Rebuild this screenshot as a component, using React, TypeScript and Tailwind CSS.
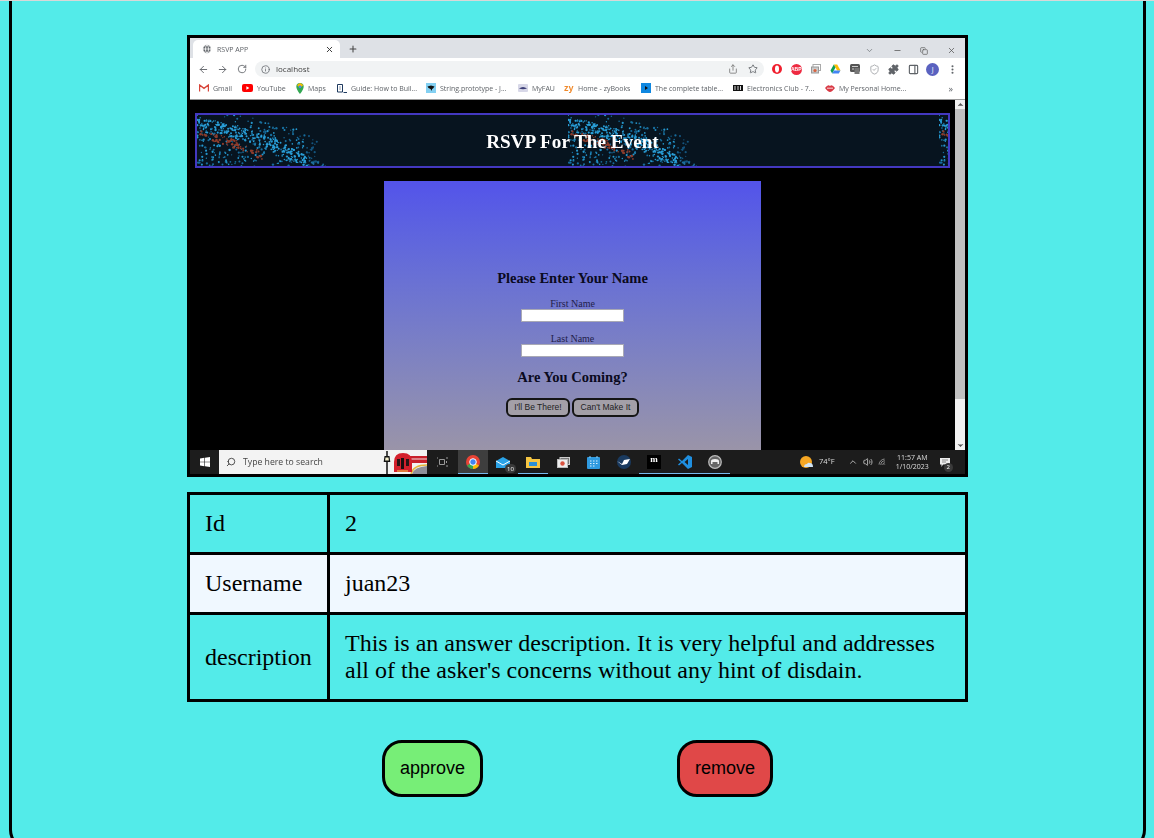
import { ArrowLeft, ArrowRight, ChevronDown, ChevronUp, Copy, Globe, Info, Minus, MoreVertical, PanelRight, Plus, Puzzle, RotateCw, Search, Share, ShieldCheck, Star, Volume2, Wifi, X } from 'lucide-react'

const BOOKMARKS = [
  { label: 'Gmail', text: 'w-[19px]', icon: 'gmail' },
  { label: 'YouTube', text: 'w-[29px]', icon: 'youtube' },
  { label: 'Maps', text: 'w-[19px]', icon: 'maps' },
  { label: 'Guide: How to Buil...', text: 'w-[65px]', icon: 'guide' },
  { label: 'String.prototype - J...', text: 'w-[68px]', icon: 'string' },
  { label: 'MyFAU', text: 'w-[22px]', icon: 'fau' },
  { label: 'Home - zyBooks', text: 'w-[53px]', icon: 'zy' },
  { label: 'The complete table...', text: 'w-[68px]', icon: 'table' },
  { label: 'Electronics Club - 7...', text: 'w-[68px]', icon: 'club' },
  { label: 'My Personal Home...', text: 'w-[66px]', icon: 'lips' },
]

function BookmarkIcon({ name }: { name: string }) {
  if (name === 'gmail') return <svg viewBox="0 0 10 8" className="h-2 w-[10px]"><path d="M0.5 7.5V1l4.5 3.4L9.5 1v6.5" fill="none" stroke="#d8453a" strokeWidth="1.4" /></svg>
  if (name === 'youtube') return <svg viewBox="0 0 11 8" className="h-2 w-[11px]"><rect width="11" height="8" rx="2" fill="#f00" /><path d="M4.4 2.2v3.6L7.4 4z" fill="#fff" /></svg>
  if (name === 'maps') return <svg viewBox="0 0 8 11" className="h-[11px] w-2"><path d="M4 0a3.7 3.7 0 0 0-3.7 3.7C.3 6.4 4 11 4 11s3.7-4.6 3.7-7.3A3.7 3.7 0 0 0 4 0z" fill="#34a853" /><path d="M1 2L4 0l3.4 2L4 5z" fill="#fbbc04" /><circle cx="4" cy="3.7" r="1.3" fill="#4285f4" /></svg>
  if (name === 'guide') return <svg viewBox="0 0 10 9" className="h-[9px] w-[10px]"><path d="M.5.5h5v7.5h-5zM2.5 3h1M2.5 5h1" fill="none" stroke="#1e3a5f" /><path d="M6.5 8.5H10" stroke="#1e3a5f" /></svg>
  if (name === 'string') return <svg viewBox="0 0 10 10" className="size-[10px]"><rect width="10" height="10" fill="#83d0f2" /><path d="M1.5 3.5L5 2.5l3.5 1-1.5 2-1 .5v2L4.500 6 2.500 5z" fill="#111" /></svg>
  if (name === 'fau') return <svg viewBox="0 0 10 8" className="h-2 w-[10px]"><rect width="10" height="8" rx="1" fill="#d8d8e8" /><path d="M1 4.500Q5 1.500 9 4.500Q5 6 1 4.500z" fill="#3d3f77" /></svg>
  if (name === 'zy') return <span className="w-[10px] text-[9px] leading-none font-bold text-[#f08a2c] font-['Liberation_Sans',sans-serif]">zy</span>
  if (name === 'table') return <svg viewBox="0 0 10 10" className="size-[10px]"><rect width="10" height="10" fill="#0f87e0" /><path d="M4 3v4l3-2z" fill="#111" /></svg>
  if (name === 'club') return <svg viewBox="0 0 10 6" className="h-[6px] w-[10px]"><rect width="10" height="6" fill="#111" /><path d="M2 1v4M5 1v4M7.500 1v4" stroke="#ddd" /></svg>
  return <svg viewBox="0 0 10 7" className="h-[7px] w-[10px]"><path d="M0 3Q3-1 5 1 7-1 10 3 7 7 5 7 3 7 0 3z" fill="#d93a45" /><path d="M2 3.200H8" stroke="#fff" strokeWidth=".8" /></svg>
}

function ExtensionIcons() {
  return (
    <div className="ml-[3px] flex items-center">
      <span className="flex w-[19.5px] justify-center"><svg viewBox="0 0 10 10" className="size-[10px]"><circle cx="5" cy="5" r="5" fill="#f01f2e" /><ellipse cx="5" cy="5" rx="2" ry="3.400" fill="#fff" /></svg></span>
      <span className="flex w-[19.5px] justify-center"><span className="flex size-[11px] items-center justify-center rounded-full bg-[#ee2a41] text-[5px] leading-none font-bold text-white font-['Liberation_Sans',sans-serif]">ABP</span></span>
      <span className="flex w-[19.5px] justify-center"><svg viewBox="0 0 10 10" className="size-[10px]"><rect x="2" y="0.500" width="7.500" height="6" fill="none" stroke="#aaa" /><rect x=".5" y="3" width="7" height="6" fill="#ccc" stroke="#999" /><circle cx="4" cy="6.500" r="1.600" fill="#d8623f" /></svg></span>
      <span className="flex w-[19.5px] justify-center"><svg viewBox="0 0 11 10" className="h-[10px] w-[11px]"><path d="M3.800.5h3.400l3.300 6H7.100z" fill="#fbbc04" /><path d="M3.800.5L.5 6.500 2.200 9.500 5.500 3.500z" fill="#0f9d58" /><path d="M2.200 9.500h6.600l1.700-3H3.900z" fill="#4285f4" /></svg></span>
      <span className="flex w-[19.5px] justify-center"><svg viewBox="0 0 10 10" className="size-[10px]"><rect width="10" height="8" rx="1.500" fill="#555" /><rect x="4.500" y="4" width="5" height="6" fill="#777" /><path d="M2 2.500h6M2 5h2" stroke="#eee" strokeWidth=".8" /></svg></span>
      <span className="flex w-[19.5px] justify-center"><ShieldCheck className="size-[11px] text-[#8a8d91]" strokeWidth={1.5} /></span>
      <span className="flex w-[19.5px] justify-center"><Puzzle className="size-[11px] fill-[#5f6368] text-[#5f6368]" /></span>
      <span className="flex w-[19.5px] justify-center"><PanelRight className="size-[11px] text-[#5f6368]" strokeWidth={2.5} /></span>
      <span className="flex w-[19.5px] justify-center"><span className="flex size-[13px] items-center justify-center rounded-full bg-[#5a62c0] text-[7px] leading-none text-white font-['Open_Sans',sans-serif]">J</span></span>
      <span className="flex w-[19.5px] justify-center"><MoreVertical className="size-[11px] text-[#5f6368]" strokeWidth={2.500} /></span>
    </div>
  )
}

function BrowserBar() {
  return (
    <div className="flex flex-col font-['Open_Sans',sans-serif]">
      {/* tab strip */}
      <div className="flex h-5 items-end bg-[#dee1e6] pl-[3px]">
        <div className="flex h-[18px] w-[147px] items-center rounded-t-[5px] bg-white pr-[6px] pl-[9px]">
          <Globe className="size-[10px] fill-[#5f6368] text-white" />
          <span className="ml-[5px] flex-1 text-[7px] leading-none text-[#5f6368]">RSVP APP</span>
          <X className="size-[9px] text-[#333]" strokeWidth={2.5} />
        </div>
        <Plus className="mb-1 ml-[8px] size-[10px] text-[#444]" strokeWidth={2.5} />
        <div className="mb-[3px] ml-auto flex items-center pr-[9px]">
          <ChevronDown className="mr-[19px] size-[9px] text-[#70757a]" />
          <Minus className="mr-[18px] size-[9px] text-[#555]" />
          <Copy className="mr-[19px] size-[8px] text-[#555]" />
          <X className="size-[9px] text-[#555]" />
        </div>
      </div>
      {/* toolbar */}
      <div className="flex h-[22px] items-center bg-white pl-[8px] text-[#5f6368]">
        <ArrowLeft className="size-[11px]" />
        <ArrowRight className="ml-[8px] size-[11px]" />
        <RotateCw className="ml-[9px] size-[10px]" />
        <div className="ml-[8px] flex h-4 w-[509px] items-center rounded-full bg-[#f1f3f4] pr-[6px] pl-[6px]">
          <Info className="size-[9px]" />
          <span className="ml-[6px] flex-1 text-[8px] leading-none text-[#444]">localhost</span>
          <Share className="size-[10px] text-[#777]" />
          <Star className="ml-[10px] size-[10px]" />
        </div>
        <ExtensionIcons />
      </div>
      {/* bookmarks */}
      <div className="flex h-5 items-center border-b border-b-[#9a9a9a] bg-white pb-[3px] pl-[9px] text-[7px] leading-none text-[#5f6368]">
        {BOOKMARKS.map((b) => (
          <div key={b.label} className="mr-[10px] flex items-center gap-[4px]">
            <BookmarkIcon name={b.icon} />
            <span className={`${b.text} whitespace-nowrap`}>{b.label}</span>
          </div>
        ))}
        <span className="ml-auto pr-[12px] text-[9px] leading-none">»</span>
      </div>
    </div>
  )
}

// the particle wave of the banner photo
function makeDots() {
  let seed = 11
  const rnd = () => {
    seed = (seed * 16807) % 2147483647
    return seed / 2147483647
  }
  const band = (x: number) => 10 + x * 0.12 + (x * x) / 520
  const top = (x: number) => (x < 40 ? 0 : x < 100 ? (x - 40) * 0.2 : 12 + (x - 100) * 0.72)
  const dots: { x: number; y: number; r: number; c: string }[] = []
  // scattered dots under the wave's upper edge
  for (let i = 0; i < 420; i++) {
    const x = Math.pow(rnd(), 1.3) * 165
    const y = top(x) + rnd() * (53 - top(x))
    const fade = x > 110 ? '#14557f' : rnd() > 0.5 ? '#2596cc' : '#176c9c'
    if (x > 120 && y < band(x) - 8) continue
    dots.push({ x, y, r: 0.6 + rnd() * 0.6, c: fade })
  }
  // bright band, red glow right below it on the left
  for (let i = 0; i < 320; i++) {
    const x = rnd() * 160
    const y = band(x) + (rnd() - 0.5) * 13
    dots.push({ x, y, r: 0.6 + rnd() * 0.6, c: x > 110 ? '#1c6f9f' : '#2a9fd8' })
  }
  for (let i = 0; i < 70; i++) {
    const x = 3 + rnd() * 62
    const y = band(x) + 4 + rnd() * 8 + x * 0.1
    dots.push({ x, y, r: 0.7 + rnd() * 0.6, c: '#8f3d2c' })
  }
  return dots
}
const DOTS = makeDots()

function BannerTile({ width }: { width: string }) {
  return (
    <svg viewBox={`0 0 ${width === 'w-[371px]' ? 371 : 11} 53`} className={`${width} h-[53px] flex-shrink-0 blur-[0.4px]`}>
      {DOTS.map((d, i) => (
        <circle key={i} cx={d.x} cy={d.y} r={d.r} fill={d.c} />
      ))}
    </svg>
  )
}

function Taskbar() {
  return (
    <div className="flex h-6 items-center bg-[#1c1c1c] font-['Open_Sans',sans-serif]">
      <div className="flex h-full w-[29px] items-center justify-center">
        <svg viewBox="0 0 10 10" className="size-[10px]"><path d="M0 1.500L4.400.8v3.900H0zM5 .7L10 0v4.700H5zM0 5.300h4.400v3.900L0 8.500zM5 5.300h5V10L5 9.300z" fill="#fff" /></svg>
      </div>
      <div className="relative flex h-full w-[208px] items-center overflow-hidden bg-[#f3f3f3] pl-[7px]">
        <Search className="size-[10px] -scale-x-100 text-[#333]" />
        <span className="ml-[7px] text-[8.700px] leading-none text-[#444]">Type here to search</span>
        {/* doodle in the search box */}
        <svg viewBox="0 0 44 24" className="absolute right-0 top-0 h-6 w-[44px]">
          <path d="M4 24V12" stroke="#111" strokeWidth="1.500" />
          <path d="M1.500 6h5l.8 6H.7z" fill="#111" />
          <path d="M2.500 7.500h3l.4 3H2.100z" fill="#f2eecb" />
          <path d="M4 1v5" stroke="#111" strokeWidth="1.500" />
          <path d="M29 24q2-7 15-8v8z" fill="#8f8f98" />
          <path d="M28 24q2-9 16-9" fill="none" stroke="#e6b53a" strokeWidth="1.500" />
          <path d="M26 6h18v7H27z" fill="#c8202b" />
          <path d="M27 9h17" stroke="#f0e2e2" />
          <path d="M11 22V12q0-9 9-9 9 0 9 9v10z" fill="#d3202c" />
          <path d="M14 9h3v7h-3zM23 9h3v7h-3z" fill="#2a1416" />
          <rect x="18" y="8" width="3" height="11" fill="#1c0e10" />
          <path d="M14 21h11" stroke="#f0d24a" />
        </svg>
      </div>
      <div className="flex w-[31px] justify-center">
        <svg viewBox="0 0 11 10" className="h-[10px] w-[11px]"><path d="M0 1h1M9 1h2M2.500 2.500h5v5h-5zM0 9h1M9 9h2M9.500 4v2" fill="none" stroke="#999" /></svg>
      </div>
      <div className="flex h-full w-[30px] items-center justify-center border-b border-b-[#76b9ed] bg-[#3e3e3e]">
        <svg viewBox="0 0 14 14" className="size-[14px]"><circle cx="7" cy="7" r="7" fill="#ea4335" /><path d="M7 7L1 10.500A7 7 0 0 0 7 14z" fill="#34a853" /><path d="M7 7l6 3.500A7 7 0 0 1 7 14z" fill="#fbbc04" /><circle cx="7" cy="7" r="3.300" fill="#4285f4" stroke="#fff" /></svg>
      </div>
      <div className="relative flex h-full w-[30px] items-center justify-center">
        <svg viewBox="0 0 14 11" className="h-[11px] w-[14px]"><path d="M0 4L7 0l7 4v7H0z" fill="#2aa3e8" /><path d="M0 4l7 4 7-4" fill="none" stroke="#fff" /></svg>
        <span className="absolute bottom-[1px] right-[2px] flex h-[9px] w-[11px] items-center justify-center rounded-full bg-[#3a3a3a] text-[6px] leading-none text-white">10</span>
      </div>
      <div className="flex h-full w-[30px] items-center justify-center border-b border-b-[#76b9ed]">
        <svg viewBox="0 0 14 12" className="h-3 w-[14px]"><path d="M0 1h5l1 2h8v9H0z" fill="#f5c542" /><rect x="3" y="6" width="8" height="4" fill="#2a8fd6" /></svg>
      </div>
      <div className="flex h-full w-[30px] items-center justify-center">
        <svg viewBox="0 0 13 11" className="h-[11px] w-[13px]"><rect x="3" y=".5" width="9.500" height="7" fill="#777" stroke="#ccc" /><rect x=".5" y="2.500" width="10" height="8" fill="#eee" stroke="#bbb" /><circle cx="5.500" cy="6.500" r="2.200" fill="#d8523f" /></svg>
      </div>
      <div className="flex h-full w-[31px] items-center justify-center">
        <svg viewBox="0 0 13 13" className="size-[13px]"><rect y="1" width="13" height="12" rx="1" fill="#2f9ae0" /><path d="M3 0v2M10 0v2" stroke="#8fd0f5" /><path d="M3 5h1.500M6 5h1.500M9 5h1.500M3 7.500h1.500M6 7.500h1.500M9 7.500h1.500M3 10h1.500M6 10h1.500" stroke="#d7eefc" /></svg>
      </div>
      <div className="flex h-full w-[30px] items-center justify-center">
        <svg viewBox="0 0 14 14" className="size-[14px]"><circle cx="7" cy="7" r="7" fill="#1a3a5f" /><path d="M0 6l5 3 2-4 6-1-3 5-5 1z" fill="#fff" /></svg>
      </div>
      <div className="flex h-full w-[30px] items-center justify-center border-b border-b-[#76b9ed]">
        <span className="flex h-[14px] w-[14px] items-start justify-center bg-black text-[9px] leading-[9px] font-bold text-white font-['Liberation_Serif',serif]">m</span>
      </div>
      <div className="flex h-full w-[31px] items-center justify-center border-b border-b-[#76b9ed]">
        <svg viewBox="0 0 14 14" className="size-[14px]"><path d="M10 0l4 2v10l-4 2-6-6-3 2.500L0 9.500 3 7 0 4.500 1 3.500 4 6z" fill="#1f8fe0" /><path d="M10 4L6.500 7l3.500 3z" fill="#1c1c1c" /></svg>
      </div>
      <div className="flex h-full w-[30px] items-center justify-center border-b border-b-[#76b9ed]">
        <svg viewBox="0 0 14 14" className="size-[14px]"><circle cx="7" cy="7" r="6.300" fill="#666" stroke="#bbb" strokeWidth="1.200" /><path d="M3 9V6q0-2 4-2t4 2v3H9.500V7h-5v2z" fill="#eee" /></svg>
      </div>
      {/* system tray */}
      <div className="ml-[70px] flex flex-1 items-center">
        <svg viewBox="0 0 14 13" className="h-[13px] w-[14px]"><circle cx="6" cy="6" r="6" fill="#f5a623" /><path d="M4 11q0-3 3-3 1-2 3-1 3 0 3 4z" fill="#cfe3f5" /></svg>
        <span className="ml-[5px] text-[7.500px] leading-none text-[#ddd]">74°F</span>
        <ChevronUp className="ml-[13px] size-[10px] text-[#ccc]" />
        <Volume2 className="ml-[5px] size-[10px] text-[#ccc]" />
        <Wifi className="ml-[5px] size-[9px] -rotate-45 text-[#aaa]" />
        <div className="ml-[9px] flex flex-col items-center gap-[2px] text-[7px] leading-none text-[#ddd]">
          <span>11:57 AM</span>
          <span>1/10/2023</span>
        </div>
        <div className="relative ml-[11px]">
          <svg viewBox="0 0 10 9" className="h-[9px] w-[10px]"><path d="M0 0h10v6.500H3L1.500 9V6.500H0z" fill="#eee" /><path d="M2 2h6M2 4h4" stroke="#777" strokeWidth=".8" /></svg>
          <span className="absolute -bottom-[5px] -right-[3px] flex size-[9px] items-center justify-center rounded-full bg-[#3a3a3a] text-[6px] leading-none text-white">2</span>
        </div>
        <div className="ml-auto mr-[2px] h-full w-px self-stretch bg-[#555]" />
      </div>
    </div>
  )
}

function RsvpPage() {
  return (
    <div className="flex h-[350px] bg-black">
      <div className="flex flex-1 flex-col overflow-hidden pt-[13px] pl-[5px]">
        <div className="relative flex h-[55px] w-[755px] overflow-hidden border-2 border-[#4338c0] bg-[#07141f]">
          <BannerTile width="w-[371px]" />
          <BannerTile width="w-[371px]" />
          <BannerTile width="w-[11px]" />
          <span className="absolute inset-0 flex items-center justify-center pt-[2px] text-[19.2px] leading-none font-bold text-white">RSVP For The Event</span>
        </div>
        <div className="mt-[13px] ml-[189px] flex h-[269px] w-[377px] flex-col items-center bg-gradient-to-b from-[#5353ea] to-[#9a94a8] pt-[89px] text-[#22204a]">
          <h3 className="text-[14.5px] leading-4 font-bold text-[#0a0a20]">Please Enter Your Name</h3>
          <label className="mt-[13px] text-[10px] leading-[10px]">First Name</label>
          <div className="h-[13px] w-[103px] border border-[#a9a9b5] bg-white" />
          <label className="mt-[12px] text-[10px] leading-[10px]">Last Name</label>
          <div className="h-[13px] w-[103px] border border-[#a9a9b5] bg-white" />
          <h3 className="mt-[12px] text-[14.5px] leading-4 font-bold text-[#0a0a20]">Are You Coming?</h3>
          <div className="mt-[13px] flex gap-[2px] font-['Liberation_Sans',sans-serif] text-[8.500px] leading-none text-[#222]">
            <span className="flex h-[19px] w-[64px] items-center justify-center rounded-[6px] border-2 border-[#151515] bg-[#a39fa8]">I'll Be There!</span>
            <span className="flex h-[19px] w-[67px] items-center justify-center rounded-[6px] border-2 border-[#151515] bg-[#a39fa8]">Can't Make It</span>
          </div>
        </div>
      </div>
      {/* scrollbar */}
      <div className="flex w-[10px] flex-col items-center bg-[#f1f1f1]">
        <ChevronUp className="size-[9px] fill-[#555] text-[#555]" />
        <div className="h-[290px] w-full bg-[#c1c1c1]" />
        <div className="flex-1" />
        <ChevronDown className="size-[9px] fill-[#555] text-[#555]" />
      </div>
    </div>
  )
}

const ROWS = [
  { label: 'Id', value: '2', bg: 'bg-[#53ebe9]' },
  { label: 'Username', value: 'juan23', bg: 'bg-[#f0f8ff]' },
  { label: 'description', value: "This is an answer description. It is very helpful and addresses all of the asker's concerns without any hint of disdain.", bg: 'bg-[#53ebe9]' },
]

export default function App() {
  return (
    <div className="h-[838px] overflow-hidden border-t border-t-[#d8d8d8] bg-[#53ebe9] font-['Liberation_Serif',serif] text-black">
      <div className="ml-[9px] h-[849px] w-[1137px] rounded-b-[20px] border-x-[3px] border-b-[3px] border-black pt-[34px]">
        <div className="mx-auto w-[781px]">
          {/* screenshot of the answer */}
          <div className="border-[3px] border-black">
            <div className="blur-[0.35px]">
              <BrowserBar />
              <RsvpPage />
              <Taskbar />
            </div>
          </div>

          {/* answer details */}
          <div className="mt-[15px] grid grid-cols-[137px_1fr] gap-[3px] bg-black p-[3px] text-[24px] leading-[27px]">
            {ROWS.map((row) => [
              <div key={row.label} className={`flex items-center p-[15px] ${row.bg}`}>{row.label}</div>,
              <div key={row.value} className={`p-[15px] ${row.bg}`}>{row.value}</div>,
            ])}
          </div>

          <div className="mt-[38px] flex gap-[194px] pl-[195px] font-['Liberation_Sans',sans-serif] text-[18px] leading-[21px]">
            <button type="button" className="h-[57px] w-[101px] rounded-[20px] border-[3px] border-black bg-[#77ee77]">approve</button>
            <button type="button" className="h-[57px] w-[96px] rounded-[20px] border-[3px] border-black bg-[#e04848]">remove</button>
          </div>
        </div>
      </div>
    </div>
  )
}
